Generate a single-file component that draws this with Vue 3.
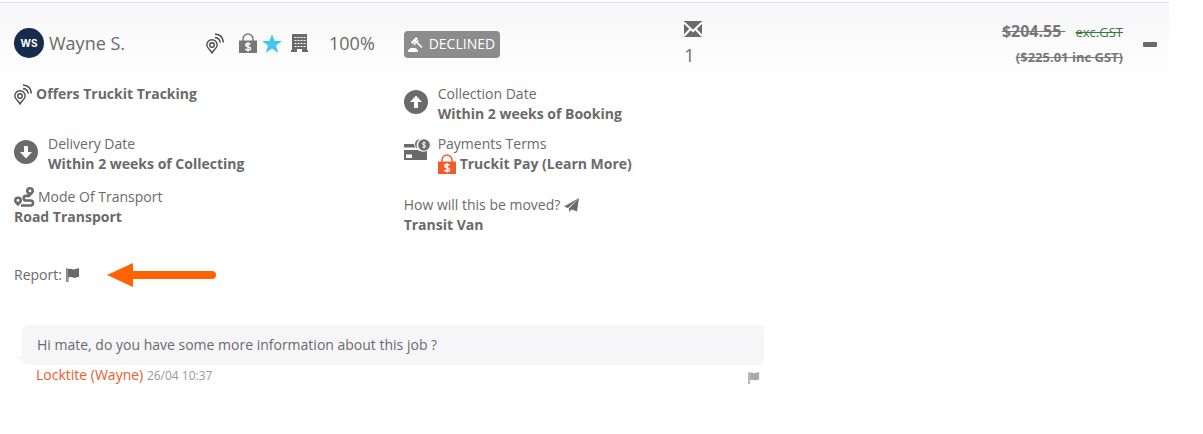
<script setup>
import { ref } from 'vue'

const open = ref(true)
const quote = {
  name: 'Wayne S.',
  initials: 'WS',
  score: '100%',
  status: 'DECLINED',
  messages: 1,
  price: '$204.55',
  total: '($225.01 inc GST)'
}
</script>

<template>
  <svg class="sprite" aria-hidden="true">
    <symbol id="tracker" viewBox="0 0 18 21">
      <g fill="none" stroke="#4d4d4d" stroke-width="1.4">
        <path d="M6 20C4.500 17 .8 15.200 .8 12a5.200 5.200 0 0 1 10.400 0c0 3.200-3.700 5-5.200 8z" />
        <circle cx="6" cy="12" r="2.300" />
        <path d="M9 4.500c3 .3 5 2.300 5.300 5.300M9 1c4.800.3 8 3.600 8.400 8.500" />
      </g>
    </symbol>
    <symbol id="lock" viewBox="0 0 18 20">
      <path d="M4 9V6a5 5 0 0 1 10 0v3" fill="none" stroke="currentColor" stroke-width="1.500" />
      <path d="M0 7.500h18V20H0z" fill="currentColor" />
      <path d="M11.500 11.500c-.6-.8-1.500-1-2.500-1-1.500 0-2.400.6-2.400 1.600 0 2.400 5 1 5 3.400 0 1-1 1.700-2.600 1.700-1.200 0-2.100-.4-2.700-1.200M9 9v9.500" fill="none" stroke="#fff" stroke-width="1.400" />
    </symbol>
    <symbol id="flag" viewBox="0 0 14 14">
      <path d="M0 0h1.500v14H0z" fill="currentColor" opacity=".8" />
      <path d="M2 1c2.500-1 4 .8 6.500.3C10 1 11 .3 13 .3V9c-2.500 0-3.500 1-5.500.7C6 9.300 4.500 8.700 2.500 9.500V14H1.500V1z" fill="currentColor" />
    </symbol>
    <symbol id="arrow" viewBox="0 0 24 24">
      <circle cx="12" cy="12" r="12" fill="currentColor" />
      <path d="M12 5.500l6 6.500h-4v6h-4v-6H6z" fill="#fff" />
    </symbol>
  </svg>

  <main class="quote">
    <header class="head">
      <div class="person">
        <span class="avatar">{{ quote.initials }}</span>
        <span class="name">{{ quote.name }}</span>
        <div class="badges">
          <svg class="tracker"><use href="#tracker" /></svg>
          <svg class="lock"><use href="#lock" /></svg>
          <svg class="star" viewBox="0 0 20 19"><path d="M10 0l2.500 7H20l-6 4.400L16.200 19 10 14.400 3.800 19 6 11.400 0 7h7.500z" fill="currentColor" /></svg>
          <svg class="building" viewBox="0 0 17 18">
            <path d="M1 0h15v16h1v2h-6v-3H6v3H0v-2h1z" fill="currentColor" />
            <path d="M3.500 3.500h11M3.500 6.500h11M3.500 9.500h11M3.500 12.500h11" stroke="#fff" stroke-width="1" stroke-dasharray="2 1" />
          </svg>
        </div>
        <span class="score">{{ quote.score }}</span>
      </div>
      <div class="state">
        <span class="status">
          <svg class="gavel" viewBox="0 0 15 15">
            <path d="M0 15c0-2.500 1.500-4 4-4h2c2.500 0 4 1.500 4 4z" fill="#fff" />
            <path d="M3.800 6.200L9 1" stroke="#fff" stroke-width="2.600" />
            <path d="M6 7.800L10.300 3.500" stroke="#fff" stroke-width="1.600" />
            <path d="M7.500 4l6.500 6.500" stroke="#fff" stroke-width="1.700" />
          </svg>
          {{ quote.status }}
        </span>
      </div>
      <div class="mail">
        <svg class="envelope" viewBox="0 0 18 16">
          <path d="M0 0h18v16H0z" fill="currentColor" />
          <path d="M0 1.500l9 8.500 9-8.500M0 15l6.500-7M18 15l-6.500-7" fill="none" stroke="#fff" stroke-width="2" />
        </svg>
        <span>{{ quote.messages }}</span>
      </div>
      <div class="cost">
        <div class="sum"><del class="price">{{ quote.price }}&nbsp;</del><del class="tax">exc.GST</del></div>
        <div class="sum"><del class="total">{{ quote.total }}</del></div>
      </div>
      <button class="toggle" type="button" aria-label="Toggle details" :aria-expanded="open" @click="open = !open">
        <svg class="minus" viewBox="0 0 14 5"><rect width="14" height="5" rx="1" fill="currentColor" /></svg>
      </button>
    </header>

    <div v-if="open" class="details">
      <section class="column">
        <div class="fact first">
          <svg class="tracker"><use href="#tracker" /></svg>
          <strong>Offers Truckit Tracking</strong>
        </div>
        <div class="fact">
          <svg class="round down"><use href="#arrow" /></svg>
          <div>Delivery Date<br><strong>Within 2 weeks of Collecting</strong></div>
        </div>
        <div class="mode">
          <div class="line">
            <svg class="route" viewBox="0 0 20 20">
              <path d="M7 18.500h9.500a2.500 2.500 0 0 0 0-5H12a2.300 2.300 0 0 1 0-4.600h4" fill="none" stroke="currentColor" stroke-width="2.600" />
              <path fill-rule="evenodd" d="M4 19.500C3 17.500 0 16 0 13.500a4 4 0 0 1 8 0c0 2.500-3 4-4 6zM4 12a1.400 1.400 0 1 0 0 2.800A1.400 1.400 0 0 0 4 12zM16 10c-1-2-4-3.500-4-6a4 4 0 0 1 8 0c0 2.500-3 4-4 6zm0-7.500a1.400 1.400 0 1 0 0 2.800 1.400 1.400 0 0 0 0-2.800z" fill="currentColor" />
            </svg>
            Mode Of Transport
          </div>
          <strong>Road Transport</strong>
        </div>
        <div class="report">
          Report:
          <button class="flag-button" type="button" aria-label="Report quote"><svg class="flag"><use href="#flag" /></svg></button>
          <svg class="pointer" viewBox="0 0 109 24">
            <path d="M0 12L26 0v8h79a4 4 0 0 1 0 8H26v8z" fill="#ff6200" />
          </svg>
        </div>
      </section>

      <section class="column">
        <div class="fact">
          <svg class="round"><use href="#arrow" /></svg>
          <div>Collection Date<br><strong>Within 2 weeks of Booking</strong></div>
        </div>
        <div class="fact pay">
          <svg class="cards" viewBox="0 0 26 22">
            <path d="M0 5h10c.3 1.500.8 2.500 1.600 3.500H0zM0 11h14c3 2 6 2 9 1v9H0z" fill="currentColor" />
            <path d="M2 15.500h6V19H2z" fill="#fff" />
            <path d="M16 0a7 7 0 0 0-2.500 9.500C9.500 7 10.500.5 16 0z" fill="currentColor" />
            <circle cx="20" cy="6" r="5.800" fill="currentColor" />
            <path d="M21.800 4.200c-1.300-1-3.500-.7-3.500.5 0 1.500 3.500 1 3.500 2.600 0 1.200-2.300 1.500-3.600.5M20 2.300v7.400" fill="none" stroke="#fff" />
          </svg>
          <div>
            Payments Terms
            <div class="line">
              <svg class="lock orange"><use href="#lock" /></svg>
              <a class="learn" href="#truckit-pay">Truckit Pay (Learn More)</a>
            </div>
          </div>
        </div>
        <div class="moved">
          <div class="line">
            How will this be moved?
            <svg class="plane" viewBox="0 0 15 14">
              <path d="M15 0L0 8.500l4 1.500zM15 0L5 10.500V14l2.500-2.600zM15 0L7 11l6 2.500z" fill="currentColor" />
            </svg>
          </div>
          <strong>Transit Van</strong>
        </div>
      </section>
    </div>

    <article v-if="open" class="message">
      <p class="bubble">Hi mate, do you have some more information about this job ?</p>
      <footer class="meta">
        <span><a class="author" href="#locktite">Locktite (Wayne)</a> <time class="time">26/04 10:37</time></span>
        <button class="flag-button pale" type="button" aria-label="Report message"><svg class="flag small"><use href="#flag" /></svg></button>
      </footer>
    </article>
  </main>
</template>

<style>
body { background: #fff; }
</style>

<style scoped>
.sprite { display: none; }
.quote {
  margin-right: 34px;
  padding-top: 2px;
  font: 14px/20px "Open Sans", "Noto Sans", sans-serif;
  color: #6a6a6a;
}
svg { display: block; flex: none; overflow: visible; }
button { padding: 0; border: 0; background: none; color: inherit; cursor: pointer; }
a { text-decoration: none; color: inherit; }
.head {
  display: grid;
  grid-template-columns: 33.333% 24% 1fr auto 46px;
  height: 82px;
  box-sizing: border-box;
  border-top: 1px solid #ddd;
  background: linear-gradient(#f7f7f9, #fff);
}
.person { display: flex; align-items: center; height: 80px; padding-left: 14px; font-size: 18px; }
.avatar {
  width: 30px;
  height: 30px;
  border-radius: 50%;
  background: #172b4d;
  color: #fff;
  font: bold 10px/30px Inter, sans-serif;
  text-align: center;
}
.name { width: 157px; margin-left: 5px; }
.badges { display: flex; align-items: center; }
.tracker { width: 18px; height: 21px; }
.lock { width: 18px; height: 20px; color: #777; }
.badges .lock { margin-left: 15px; }
.star { width: 20px; height: 19px; margin-left: 5px; color: #41c4f0; }
.building { width: 17px; height: 18px; margin-left: 9px; }
.score { margin-left: 21px; }
.state { display: flex; align-items: center; height: 82px; padding-left: 14px; }
.status {
  display: flex;
  align-items: center;
  gap: 6px;
  height: 27px;
  padding: 0 5px 0 4px;
  border-radius: 4px;
  background: #8c8c8c;
  color: #fff;
}
.gavel { width: 15px; height: 15px; }
.mail { padding: 18px 0 0 14px; font-size: 18px; }
.envelope { width: 18px; height: 16px; margin-bottom: 8px; }
.cost { padding-top: 15px; text-align: right; line-height: 26px; }
.sum { height: 26px; }
.price { font-size: 16px; font-weight: 700; color: #777; }
.tax { margin-left: 10px; font-size: 13px; color: #3c763d; }
.total { font-size: 13px; font-weight: 700; color: #777; }
.toggle { justify-self: end; align-self: center; margin-right: 12px; }
.minus { width: 14px; height: 5px; }
.details { display: grid; grid-template-columns: repeat(3, 1fr); }
.column { padding-left: 14px; white-space: nowrap; }
.fact { display: flex; gap: 10px; height: 50px; }
.first { gap: 4px; }
.round { width: 24px; height: 24px; margin-top: 6px; }
.down { transform: rotate(180deg); }
.line { display: flex; align-items: center; height: 20px; gap: 4px; }
.mode { margin-top: 3px; }
.route { width: 20px; height: 20px; }
.report { display: flex; align-items: center; height: 24px; margin-top: 36px; }
.flag-button { margin-left: 4px; }
.flag { width: 14px; height: 14px; }
.pointer { width: 109px; height: 24px; margin-left: 27px; }
.cards { width: 26px; height: 22px; margin-top: 5px; }
.pay { gap: 8px; }
.orange { color: #f15a29; }
.learn { font-weight: 700; }
.moved { margin-top: 11px; }
.plane { width: 15px; height: 14px; }
.message { width: 742px; max-width: 100%; margin: 38px 0 0 22px; }
.bubble {
  position: relative;
  margin: 0;
  padding: 10px 15px;
  border-radius: 6px;
  background: #f6f6f8;
}
.bubble::before {
  content: "";
  position: absolute;
  left: -8px;
  bottom: 2px;
  border-left: 12px solid transparent;
  border-top: 7px solid #f6f6f8;
}
.meta { display: flex; justify-content: space-between; padding: 0 4px 0 14px; }
.author { color: #f15a29; }
.time { font-size: 12px; color: #999; }
.pale { margin-top: 5px; color: #aaa; }
.small { width: 12px; height: 12px; }
</style>
